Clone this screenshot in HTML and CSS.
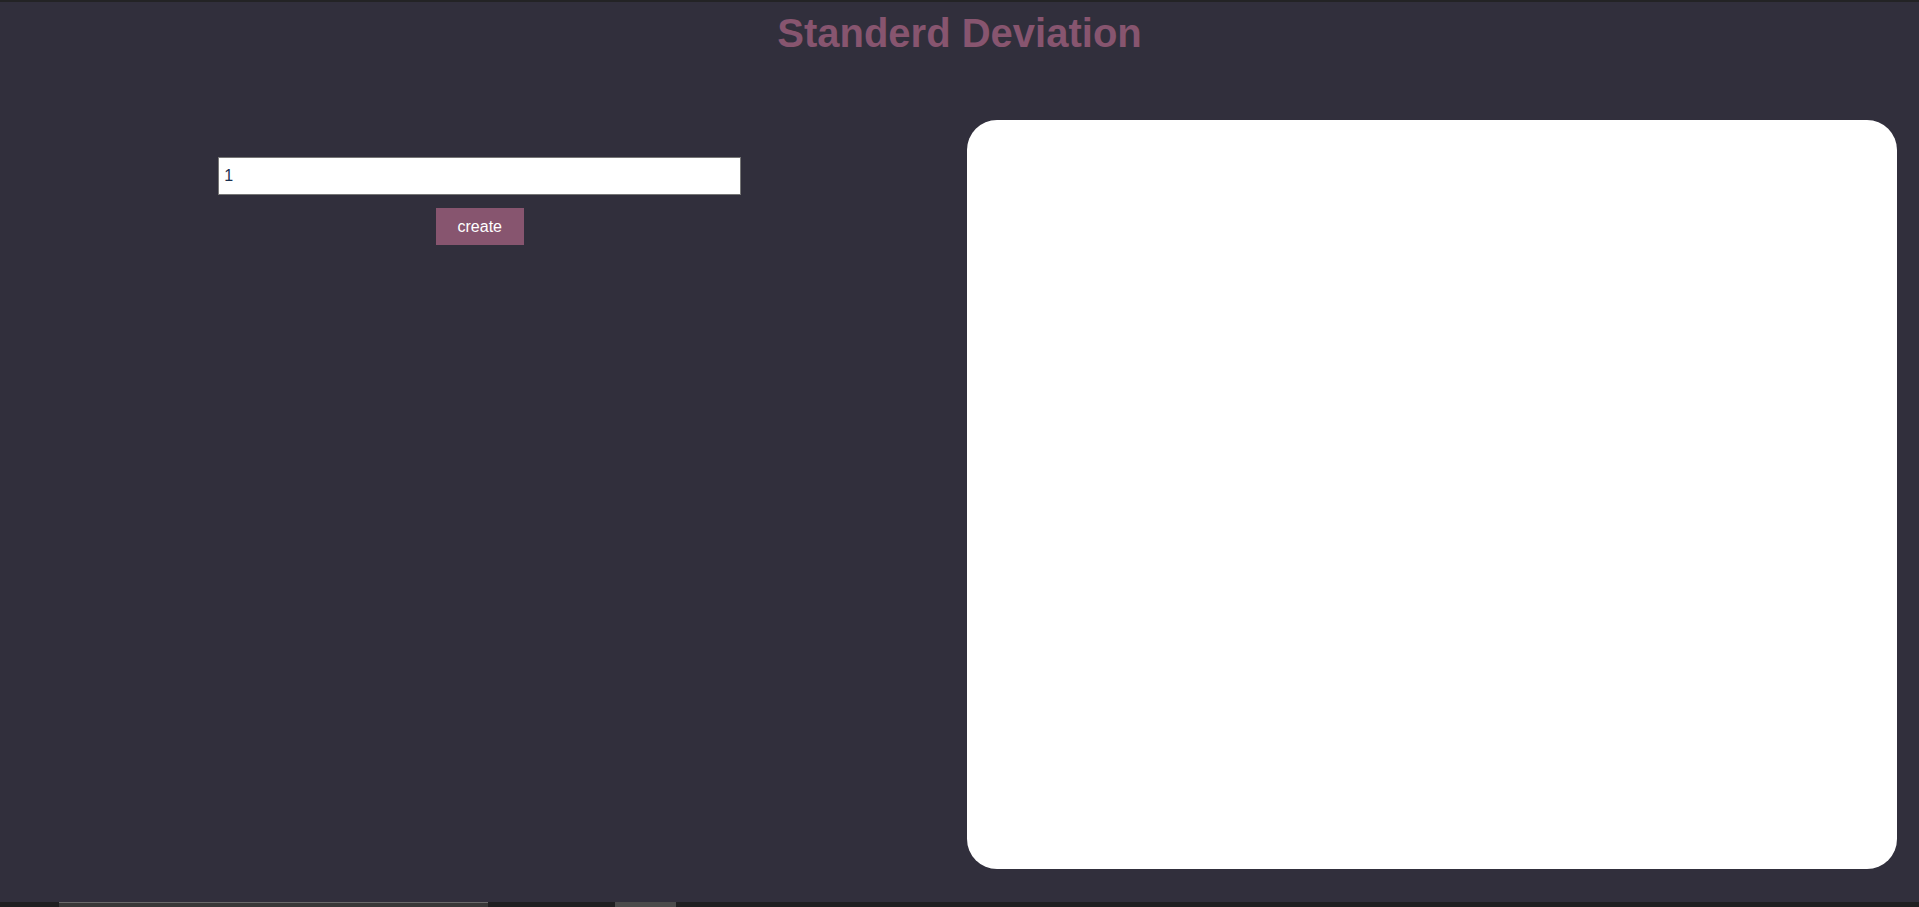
FILE: index.html
```html
<!DOCTYPE html>
<html lang="en">
<head>
    <meta charset="UTF-8">
    <meta name="viewport" content="width=device-width, initial-scale=1.0">
    <title>Standerd Deviation</title>
    <link rel="stylesheet" href="styles.css">
</head>
<body>
    <div class="top-line"></div>

    <!-- Page Title -->
    <h1 class="page-title">Standerd Deviation</h1>

    <main class="layout">
        <!-- Input Controls -->
        <section class="controls">
            <input type="text" id="count-input" class="count-input" value="1">
            <button id="create-button" class="button">create</button>
        </section>

        <!-- Chart Area -->
        <section class="chart-column">
            <div id="chart-panel" class="chart-panel"></div>
        </section>
    </main>

    <!-- Bottom scroll strip -->
    <div class="scroll-strip">
        <div class="scroll-thumb wide"></div>
        <div class="scroll-thumb small"></div>
    </div>
</body>
</html>
```

FILE: styles.css
```css
/* Color Palette */
:root {
    --page-bg-color: #312f3c;
    --accent-color: #87556f;
    --panel-color: #FFFFFF;
    --input-text-color: #1b2f4e;
    --strip-color: #1f1f21;
}

/* General Body Style */
html, body {
    height: 100%;
}

body {
    font-family: "Liberation Sans", Arial, sans-serif;
    background-color: var(--page-bg-color);
    margin: 0;
    padding: 0;
    display: flex;
    flex-direction: column;
    overflow: hidden;
}

.top-line {
    height: 2px;
    background-color: #232325;
}

/* Title */
.page-title {
    margin: 9px 0 0;
    font-size: 40px;
    line-height: 45px;
    text-align: center;
    color: var(--accent-color);
}

/* Two Column Layout */
.layout {
    flex: 1;
    display: grid;
    grid-template-columns: 1fr 1fr;
}

/* Left Controls */
.controls {
    display: flex;
    flex-direction: column;
    align-items: center;
    padding-top: 101px;
}

.count-input {
    box-sizing: border-box;
    width: 523px;
    height: 38px;
    padding: 0 5px;
    border: 1px solid #767676;
    font-family: "Liberation Sans", Arial, sans-serif;
    font-size: 16px;
    color: var(--input-text-color);
    background-color: #FFFFFF;
}

.button {
    margin-top: 13px;
    width: 88px;
    height: 37px;
    border: none;
    background-color: var(--accent-color);
    color: #FFFFFF;
    font-family: "Liberation Sans", Arial, sans-serif;
    font-size: 16px;
    cursor: pointer;
}

/* Chart Panel */
.chart-column {
    padding-top: 64px;
    padding-left: 7px;
}

.chart-panel {
    width: 930px;
    height: 749px;
    background-color: var(--panel-color);
    border-radius: 30px;
}

/* Bottom Strip */
.scroll-strip {
    height: 5px;
    background-color: var(--strip-color);
    display: flex;
    align-items: flex-end;
}

.scroll-thumb {
    height: 4px;
}

.scroll-thumb.wide {
    margin-left: 59px;
    width: 429px;
    background-color: #383838;
    border-top: 1px solid #6a6a6a;
}

.scroll-thumb.small {
    margin-left: 127px;
    width: 61px;
    height: 5px;
    background-color: #4b4b4b;
}
```
